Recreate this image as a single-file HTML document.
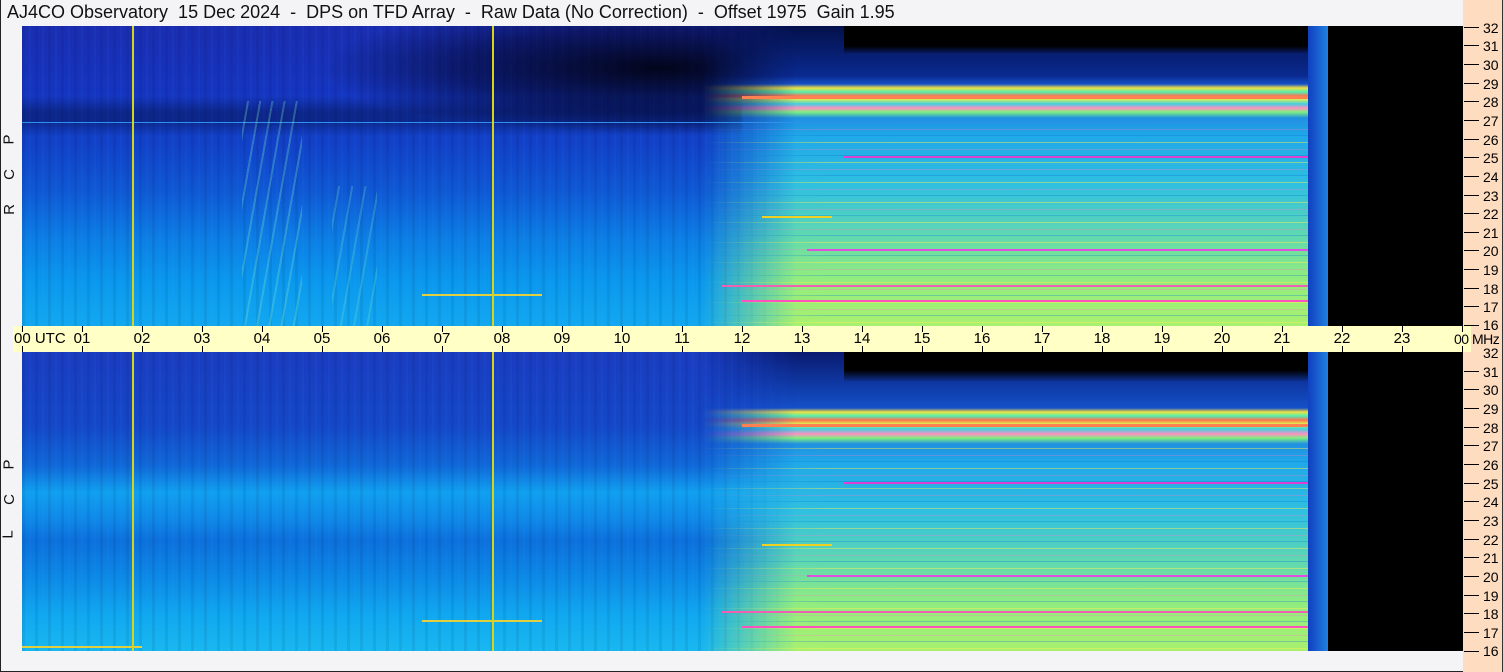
<!DOCTYPE html>
<html><head><meta charset="utf-8"><style>
*{margin:0;padding:0;box-sizing:border-box}
body{width:1503px;height:672px;background:#f4f4f6;position:relative;overflow:hidden;font-family:"Liberation Sans",sans-serif;border-left:1px solid #222;border-bottom:1px solid #222}
.a{position:absolute}
.title{left:6px;top:2px;font-size:18px;white-space:pre;color:#111}
.rp{left:1462px;top:0;width:40px;height:672px;background:#fddcc0;border-right:1px solid #333}
.panel{position:absolute;left:21px;width:1441px;overflow:hidden}
.bar{left:12px;top:326px;width:1458px;height:26px;background:#ffffc6}
.tk{position:absolute;width:1px;height:6px;background:#000}
.tl{position:absolute;top:330px;font-size:15px;color:#000;transform:translateX(-50%)}
.fl{position:absolute;left:1463px;width:15px;height:1px;background:#000}
.fn{position:absolute;left:1482px;font-size:14px;color:#000;transform:translateY(-50%)}
.vl{position:absolute;width:2px;background:#d4d418}
.lab{position:absolute;left:3px;font-size:15px;transform:rotate(-90deg);color:#111}
.ml{position:absolute;height:2px}
</style></head><body>
<div class="a title">AJ4CO Observatory  15 Dec 2024  -  DPS on TFD Array  -  Raw Data (No Correction)  -  Offset 1975  Gain 1.95</div>
<div class="a rp"></div>

<!-- TOP PANEL -->
<div class="panel" style="top:26px;height:300px">
 <div class="a" style="left:0;top:0;width:1441px;height:300px;background:linear-gradient(to bottom,#1a2db0 0%,#1535c0 22%,#1142c8 40%,#0f58d4 55%,#0c7ce4 70%,#0a98ee 85%,#12a8f0 100%)"></div>
 <div class="a" style="left:0;top:0;width:1441px;height:300px;background:repeating-linear-gradient(to right,rgba(0,0,40,.07) 0 3px,transparent 3px 7px,rgba(80,160,255,.05) 7px 9px,transparent 9px 13px)"></div>
 <div class="a" style="left:300px;top:0;width:560px;height:120px;background:radial-gradient(ellipse 60% 55% at 60% 35%,rgba(0,0,10,.9),rgba(0,0,30,.5) 60%,transparent 100%)"></div>
 <div class="a" style="left:0;top:70px;width:720px;height:40px;background:linear-gradient(to bottom,transparent,rgba(0,0,30,.35) 40%,rgba(0,0,30,.35) 60%,transparent)"></div>
 <div class="a" style="left:680px;top:0;width:626px;height:300px;-webkit-mask-image:linear-gradient(to right,transparent 0,#000 15%);background:linear-gradient(to bottom,#04104a 0,#0a2a90 50px,#1550c8 58px,#f0e040 62px,#50f0b0 66px,#ff7050 70px,#e0f050 73px,#40d0e0 78px,#ff90c0 82px,#80f080 86px,#2090e0 92px,#20a8e8 110px,#30c0e0 160px,#60d8b0 210px,#90ec80 250px,#a8f070 300px)"></div>
 <div class="a" style="left:680px;top:90px;width:626px;height:210px;-webkit-mask-image:linear-gradient(to right,transparent 0,#000 20%);background:repeating-linear-gradient(to bottom,transparent 0 6px,rgba(255,240,80,.45) 6px 7px,transparent 7px 13px,rgba(255,120,200,.3) 13px 14px,transparent 14px 19px,rgba(0,120,220,.3) 19px 20px)"></div>
 <div class="a" style="left:822px;top:0;width:464px;height:28px;background:linear-gradient(to bottom,#000 0,#000 20px,rgba(0,0,0,0))"></div>
 <div class="ml" style="left:822px;top:130px;width:484px;background:#e040d0"></div>
 <div class="ml" style="left:785px;top:223px;width:521px;background:#e050e0"></div>
 <div class="ml" style="left:700px;top:259px;width:606px;background:#f060b0"></div>
 <div class="ml" style="left:720px;top:274px;width:586px;background:#ff50c0"></div>
 <div class="ml" style="left:720px;top:70px;width:586px;height:3px;background:#ff8050"></div>
 <div class="ml" style="left:740px;top:190px;width:70px;background:#f0d020"></div>
 <div class="ml" style="left:400px;top:268px;width:120px;background:#e0d040"></div>
 <div class="ml" style="left:0;top:96px;width:1306px;height:1px;background:#3090f0"></div>
 <div class="a" style="left:220px;top:75px;width:60px;height:225px;background:repeating-linear-gradient(100deg,transparent 0 5px,rgba(120,230,200,.3) 5px 7px,transparent 7px 12px)"></div>
 <div class="a" style="left:310px;top:160px;width:45px;height:140px;background:repeating-linear-gradient(100deg,transparent 0 6px,rgba(120,230,200,.25) 6px 8px,transparent 8px 13px)"></div>
 <div class="a" style="left:1286px;top:0;width:20px;height:300px;background:linear-gradient(to right,#1040c0,#2080e0)"></div>
 <div class="a" style="left:1306px;top:0;width:135px;height:300px;background:#000"></div>
</div>

<!-- BOTTOM PANEL -->
<div class="panel" style="top:352px;height:299px">
 <div class="a" style="left:0;top:0;width:1441px;height:299px;background:linear-gradient(to bottom,#1a3cc0 0%,#1448c8 25%,#1068d8 38%,#10a0f0 47%,#0f88e8 56%,#0c70dc 63%,#0c88e6 75%,#10a8f0 88%,#18b8f0 100%)"></div>
 <div class="a" style="left:0;top:0;width:1441px;height:299px;background:repeating-linear-gradient(to right,rgba(0,0,40,.07) 0 3px,transparent 3px 7px,rgba(80,160,255,.05) 7px 9px,transparent 9px 13px)"></div>
 <div class="a" style="left:680px;top:0;width:626px;height:299px;-webkit-mask-image:linear-gradient(to right,transparent 0,#000 15%);background:linear-gradient(to bottom,#0a1a70 0,#1040b0 40px,#1550c8 56px,#f0e040 60px,#50f0b0 64px,#ff7050 68px,#e0f050 72px,#40d0e0 77px,#ff90c0 82px,#80f080 86px,#2090e0 92px,#20a8e8 110px,#30c0e0 160px,#60d8b0 210px,#90ec80 250px,#a8f070 299px)"></div>
 <div class="a" style="left:680px;top:90px;width:626px;height:209px;-webkit-mask-image:linear-gradient(to right,transparent 0,#000 20%);background:repeating-linear-gradient(to bottom,transparent 0 6px,rgba(255,240,80,.45) 6px 7px,transparent 7px 13px,rgba(255,120,200,.3) 13px 14px,transparent 14px 19px,rgba(0,120,220,.3) 19px 20px)"></div>
 <div class="a" style="left:822px;top:0;width:464px;height:30px;background:linear-gradient(to bottom,#000 0,#000 18px,rgba(0,0,0,0))"></div>
 <div class="ml" style="left:822px;top:130px;width:484px;background:#e040d0"></div>
 <div class="ml" style="left:785px;top:223px;width:521px;background:#e050e0"></div>
 <div class="ml" style="left:700px;top:259px;width:606px;background:#f060b0"></div>
 <div class="ml" style="left:720px;top:274px;width:586px;background:#ff50c0"></div>
 <div class="ml" style="left:720px;top:72px;width:586px;height:3px;background:#ff8050"></div>
 <div class="ml" style="left:740px;top:192px;width:70px;background:#f0d020"></div>
 <div class="ml" style="left:400px;top:268px;width:120px;background:#e0d040"></div>
 <div class="ml" style="left:0;top:294px;width:120px;background:#e0d040"></div>
 <div class="a" style="left:1286px;top:0;width:20px;height:299px;background:linear-gradient(to right,#1040c0,#2080e0)"></div>
 <div class="a" style="left:1306px;top:0;width:135px;height:299px;background:#000"></div>
</div>

<div class="vl" style="left:131px;top:26px;height:300px"></div>
<div class="vl" style="left:491px;top:26px;height:300px"></div>
<div class="vl" style="left:131px;top:352px;height:299px"></div>
<div class="vl" style="left:491px;top:352px;height:299px"></div>

<div class="lab" style="top:131px">P</div>
<div class="lab" style="top:166px">C</div>
<div class="lab" style="top:201px">R</div>
<div class="lab" style="top:456px">P</div>
<div class="lab" style="top:491px">C</div>
<div class="lab" style="top:526px">L</div>

<!-- time bar -->
<div class="a bar"></div>
<div class="tk" style="left:21px;top:326px"></div><div class="tk" style="left:21px;top:346px"></div>
<div class="tk" style="left:81px;top:326px"></div><div class="tk" style="left:81px;top:346px"></div>
<div class="tk" style="left:141px;top:326px"></div><div class="tk" style="left:141px;top:346px"></div>
<div class="tk" style="left:201px;top:326px"></div><div class="tk" style="left:201px;top:346px"></div>
<div class="tk" style="left:261px;top:326px"></div><div class="tk" style="left:261px;top:346px"></div>
<div class="tk" style="left:321px;top:326px"></div><div class="tk" style="left:321px;top:346px"></div>
<div class="tk" style="left:381px;top:326px"></div><div class="tk" style="left:381px;top:346px"></div>
<div class="tk" style="left:441px;top:326px"></div><div class="tk" style="left:441px;top:346px"></div>
<div class="tk" style="left:501px;top:326px"></div><div class="tk" style="left:501px;top:346px"></div>
<div class="tk" style="left:561px;top:326px"></div><div class="tk" style="left:561px;top:346px"></div>
<div class="tk" style="left:621px;top:326px"></div><div class="tk" style="left:621px;top:346px"></div>
<div class="tk" style="left:681px;top:326px"></div><div class="tk" style="left:681px;top:346px"></div>
<div class="tk" style="left:741px;top:326px"></div><div class="tk" style="left:741px;top:346px"></div>
<div class="tk" style="left:801px;top:326px"></div><div class="tk" style="left:801px;top:346px"></div>
<div class="tk" style="left:861px;top:326px"></div><div class="tk" style="left:861px;top:346px"></div>
<div class="tk" style="left:921px;top:326px"></div><div class="tk" style="left:921px;top:346px"></div>
<div class="tk" style="left:981px;top:326px"></div><div class="tk" style="left:981px;top:346px"></div>
<div class="tk" style="left:1041px;top:326px"></div><div class="tk" style="left:1041px;top:346px"></div>
<div class="tk" style="left:1101px;top:326px"></div><div class="tk" style="left:1101px;top:346px"></div>
<div class="tk" style="left:1161px;top:326px"></div><div class="tk" style="left:1161px;top:346px"></div>
<div class="tk" style="left:1221px;top:326px"></div><div class="tk" style="left:1221px;top:346px"></div>
<div class="tk" style="left:1281px;top:326px"></div><div class="tk" style="left:1281px;top:346px"></div>
<div class="tk" style="left:1341px;top:326px"></div><div class="tk" style="left:1341px;top:346px"></div>
<div class="tk" style="left:1401px;top:326px"></div><div class="tk" style="left:1401px;top:346px"></div>
<div class="tk" style="left:1461px;top:326px"></div><div class="tk" style="left:1461px;top:346px"></div>
<div class="a" style="left:13px;top:330px;font-size:15px;white-space:pre">00 UTC</div>
<div class="tl" style="left:81px">01</div><div class="tl" style="left:141px">02</div><div class="tl" style="left:201px">03</div>
<div class="tl" style="left:261px">04</div><div class="tl" style="left:321px">05</div><div class="tl" style="left:381px">06</div>
<div class="tl" style="left:441px">07</div><div class="tl" style="left:501px">08</div><div class="tl" style="left:561px">09</div>
<div class="tl" style="left:621px">10</div><div class="tl" style="left:681px">11</div><div class="tl" style="left:741px">12</div>
<div class="tl" style="left:801px">13</div><div class="tl" style="left:861px">14</div><div class="tl" style="left:921px">15</div>
<div class="tl" style="left:981px">16</div><div class="tl" style="left:1041px">17</div><div class="tl" style="left:1101px">18</div>
<div class="tl" style="left:1161px">19</div><div class="tl" style="left:1221px">20</div><div class="tl" style="left:1281px">21</div>
<div class="tl" style="left:1341px">22</div><div class="tl" style="left:1401px">23</div>
<div class="a" style="left:1453px;top:331px;font-size:14px;letter-spacing:-0.5px;white-space:pre">00 MHz</div>

<!-- freq axis top -->
<div class="fl" style="top:27px"></div><div class="fn" style="top:28px">32</div>
<div class="fl" style="top:45px"></div><div class="fn" style="top:46px">31</div>
<div class="fl" style="top:64px"></div><div class="fn" style="top:65px">30</div>
<div class="fl" style="top:83px"></div><div class="fn" style="top:84px">29</div>
<div class="fl" style="top:101px"></div><div class="fn" style="top:102px">28</div>
<div class="fl" style="top:120px"></div><div class="fn" style="top:121px">27</div>
<div class="fl" style="top:139px"></div><div class="fn" style="top:140px">26</div>
<div class="fl" style="top:157px"></div><div class="fn" style="top:158px">25</div>
<div class="fl" style="top:176px"></div><div class="fn" style="top:177px">24</div>
<div class="fl" style="top:195px"></div><div class="fn" style="top:196px">23</div>
<div class="fl" style="top:213px"></div><div class="fn" style="top:214px">22</div>
<div class="fl" style="top:232px"></div><div class="fn" style="top:233px">21</div>
<div class="fl" style="top:250px"></div><div class="fn" style="top:251px">20</div>
<div class="fl" style="top:269px"></div><div class="fn" style="top:270px">19</div>
<div class="fl" style="top:288px"></div><div class="fn" style="top:289px">18</div>
<div class="fl" style="top:306px"></div><div class="fn" style="top:307px">17</div>
<div class="fl" style="top:325px"></div><div class="fn" style="top:325px">16</div>
<!-- freq axis bottom -->
<div class="fn" style="top:353px">32</div>
<div class="fl" style="top:371px"></div><div class="fn" style="top:372px">31</div>
<div class="fl" style="top:389px"></div><div class="fn" style="top:390px">30</div>
<div class="fl" style="top:408px"></div><div class="fn" style="top:409px">29</div>
<div class="fl" style="top:427px"></div><div class="fn" style="top:428px">28</div>
<div class="fl" style="top:445px"></div><div class="fn" style="top:446px">27</div>
<div class="fl" style="top:464px"></div><div class="fn" style="top:465px">26</div>
<div class="fl" style="top:483px"></div><div class="fn" style="top:484px">25</div>
<div class="fl" style="top:501px"></div><div class="fn" style="top:502px">24</div>
<div class="fl" style="top:520px"></div><div class="fn" style="top:521px">23</div>
<div class="fl" style="top:539px"></div><div class="fn" style="top:540px">22</div>
<div class="fl" style="top:557px"></div><div class="fn" style="top:558px">21</div>
<div class="fl" style="top:576px"></div><div class="fn" style="top:577px">20</div>
<div class="fl" style="top:595px"></div><div class="fn" style="top:596px">19</div>
<div class="fl" style="top:613px"></div><div class="fn" style="top:614px">18</div>
<div class="fl" style="top:632px"></div><div class="fn" style="top:633px">17</div>
<div class="fl" style="top:651px"></div><div class="fn" style="top:651px">16</div>
</body></html>
